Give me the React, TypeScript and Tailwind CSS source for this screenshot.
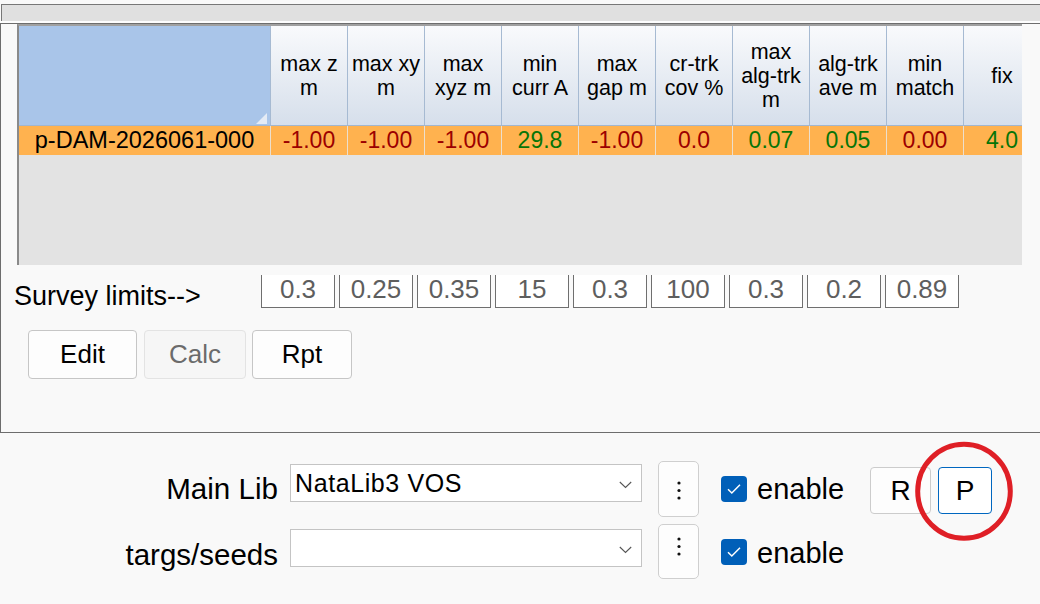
import React from "react";

const headers: string[][] = [
  ["max z", "m"],
  ["max xy", "m"],
  ["max", "xyz m"],
  ["min", "curr A"],
  ["max", "gap m"],
  ["cr-trk", "cov %"],
  ["max", "alg-trk", "m"],
  ["alg-trk", "ave m"],
  ["min", "match"],
  ["fix"],
];

const values: { v: string; good: boolean }[] = [
  { v: "-1.00", good: false },
  { v: "-1.00", good: false },
  { v: "-1.00", good: false },
  { v: "29.8", good: true },
  { v: "-1.00", good: false },
  { v: "0.0", good: false },
  { v: "0.07", good: true },
  { v: "0.05", good: true },
  { v: "0.00", good: false },
  { v: "4.0", good: true },
];

const limits = ["0.3", "0.25", "0.35", "15", "0.3", "100", "0.3", "0.2", "0.89"];

function Chevron() {
  return (
    <svg width="13" height="8" viewBox="0 0 13 8" className="absolute right-[9px] top-[16px]">
      <path d="M0.8 1 L6.5 6.5 L12.2 1" stroke="#555" strokeWidth="1.1" fill="none" />
    </svg>
  );
}

function Dots() {
  return (
    <svg width="4" height="20" viewBox="0 0 4 20">
      <circle cx="2" cy="2" r="1.6" fill="#111" />
      <circle cx="2" cy="9.5" r="1.6" fill="#111" />
      <circle cx="2" cy="17" r="1.6" fill="#111" />
    </svg>
  );
}

function Check() {
  return (
    <div className="w-[26px] h-[26px] shrink-0 rounded-[4px] bg-[#005fb8] flex items-center justify-center">
      <svg width="26" height="26" viewBox="0 0 26 26">
        <path d="M7 13.2 L10.8 17 L19 8.8" stroke="#fff" strokeWidth="1.5" fill="none" />
      </svg>
    </div>
  );
}

export default function App() {
  return (
    <div className="relative w-[1040px] h-[604px] overflow-hidden bg-[#f9f9f9] text-black font-['Liberation_Sans',Arial,sans-serif]">
      <div className="h-[4px]" />
      <div className="ml-[1px] h-[17px] border-t border-l border-[#777777] bg-[#e0e0e0]" />
      <div className="h-[2px] bg-[#fdfdfd]" />
      <div className="h-[410px] border-t border-l border-b border-[#6d6d6d] bg-[#f9f9f9] flex flex-col">
        <div className="ml-[16px] w-[1005px] h-[241px] shrink-0 border-t-2 border-l-2 border-t-[#a0a0a0] border-l-[#8a8a8a] bg-[#e3e3e3] overflow-hidden">
          <div className="flex h-[100px] border-b border-[#a2b6ce]">
            <div className="relative w-[251px] shrink-0 bg-[#a9c5e9]">
              <svg className="absolute right-[3px] bottom-[1px]" width="11" height="11" viewBox="0 0 11 11">
                <polygon points="11,0 11,11 0,11" fill="#e4ebf5" />
              </svg>
            </div>
            {headers.map((h, i) => (
              <div
                key={i}
                className="w-[77px] shrink-0 border-l border-[#a6bad2] bg-linear-to-b from-[#f9fafc] to-[#d6dfeb] flex flex-col items-center justify-center text-[21.5px] leading-[24px] text-center"
              >
                {h.map((l, j) => (
                  <span key={j} className="whitespace-nowrap">
                    {l}
                  </span>
                ))}
              </div>
            ))}
          </div>
          <div className="flex h-[29px]">
            <div className="w-[251px] shrink-0 bg-[#ffb24f] flex items-center justify-center text-[23.5px] leading-none">
              p-DAM-2026061-000
            </div>
            {values.map((c, i) => (
              <div
                key={i}
                className={
                  "w-[77px] shrink-0 border-l border-[#ecdfcd] bg-[#ffb24f] flex items-center justify-center text-[23px] leading-none " +
                  (c.good ? "text-[#077507]" : "text-[#9c0000]")
                }
              >
                {c.v}
              </div>
            ))}
          </div>
        </div>

        <div className="mt-[10px] flex h-[43px] items-start">
          <div className="w-[260px] shrink-0 pl-[13px] text-[27px] leading-[43px] whitespace-nowrap">
            {"Survey limits-->"}
          </div>
          <div className="flex gap-[4px]">
            {limits.map((v, i) => (
              <div
                key={i}
                className="w-[74px] h-[33px] border-x border-b border-[#6f6f6f] bg-white text-center text-[26px] leading-[29px] text-[#5e5e5e]"
              >
                {v}
              </div>
            ))}
          </div>
        </div>

        <div className="mt-[12px] ml-[27px] flex">
          <button className="w-[109px] h-[49px] rounded-[4px] border border-[#c6c6c6] bg-[#fdfdfd] text-[26px] text-black">
            Edit
          </button>
          <button className="ml-[7px] w-[102px] h-[49px] rounded-[4px] border border-[#e3e3e3] bg-[#f6f6f6] text-[26px] text-[#6b6b6b]">
            Calc
          </button>
          <button className="ml-[6px] w-[100px] h-[49px] rounded-[4px] border border-[#c6c6c6] bg-[#fdfdfd] text-[26px] text-black">
            Rpt
          </button>
        </div>
      </div>

      <div className="pt-[28px]">
        <div className="flex items-start h-[56px]">
          <div className="w-[278px] shrink-0 mt-[9px] text-right text-[29.6px] leading-[38px] whitespace-nowrap">Main Lib</div>
          <div className="relative ml-[12px] mt-[3px] w-[352px] h-[38px] border border-[#c4c4c4] bg-white">
            <span className="absolute left-[4px] top-0 text-[25px] leading-[36px] tracking-[0.6px] whitespace-nowrap">
              NataLib3 VOS
            </span>
            <Chevron />
          </div>
          <div className="ml-[16px] w-[41px] h-[56px] rounded-[5px] border border-[#cfcfcf] bg-[#fdfdfd] flex justify-center pt-[19px]">
            <Dots />
          </div>
          <div className="ml-[22px] mt-[15px]">
            <Check />
          </div>
          <div className="ml-[10px] w-[87px] mt-[9px] text-[29px] leading-[38px] whitespace-nowrap">enable</div>
          <button className="ml-[26px] mt-[6px] w-[61px] h-[47px] rounded-[4px] border border-[#cccccc] bg-[#fdfdfd] text-[28px] leading-none">
            R
          </button>
          <button className="ml-[7px] mt-[6px] w-[54px] h-[47px] rounded-[4px] border border-[#0067c0] bg-white text-[28px] leading-none">
            P
          </button>
        </div>
        <div className="flex items-start h-[55px] mt-[7px]">
          <div className="w-[278px] shrink-0 mt-[12px] text-right text-[29.5px] leading-[38px] whitespace-nowrap">targs/seeds</div>
          <div className="relative ml-[12px] mt-[5px] w-[352px] h-[38px] border border-[#c4c4c4] bg-white">
            <Chevron />
          </div>
          <div className="ml-[16px] w-[41px] h-[55px] rounded-[5px] border border-[#cfcfcf] bg-[#fdfdfd] flex justify-center pt-[12px]">
            <Dots />
          </div>
          <div className="ml-[22px] mt-[15px]">
            <Check />
          </div>
          <div className="ml-[10px] w-[87px] mt-[10px] text-[29px] leading-[38px] whitespace-nowrap">enable</div>
        </div>
      </div>

      <svg className="absolute left-[913px] top-[440px]" width="102" height="103" viewBox="0 0 102 103">
        <ellipse cx="51" cy="51.3" rx="46.3" ry="47" stroke="#df1f26" strokeWidth="5" fill="none" />
      </svg>
    </div>
  );
}
